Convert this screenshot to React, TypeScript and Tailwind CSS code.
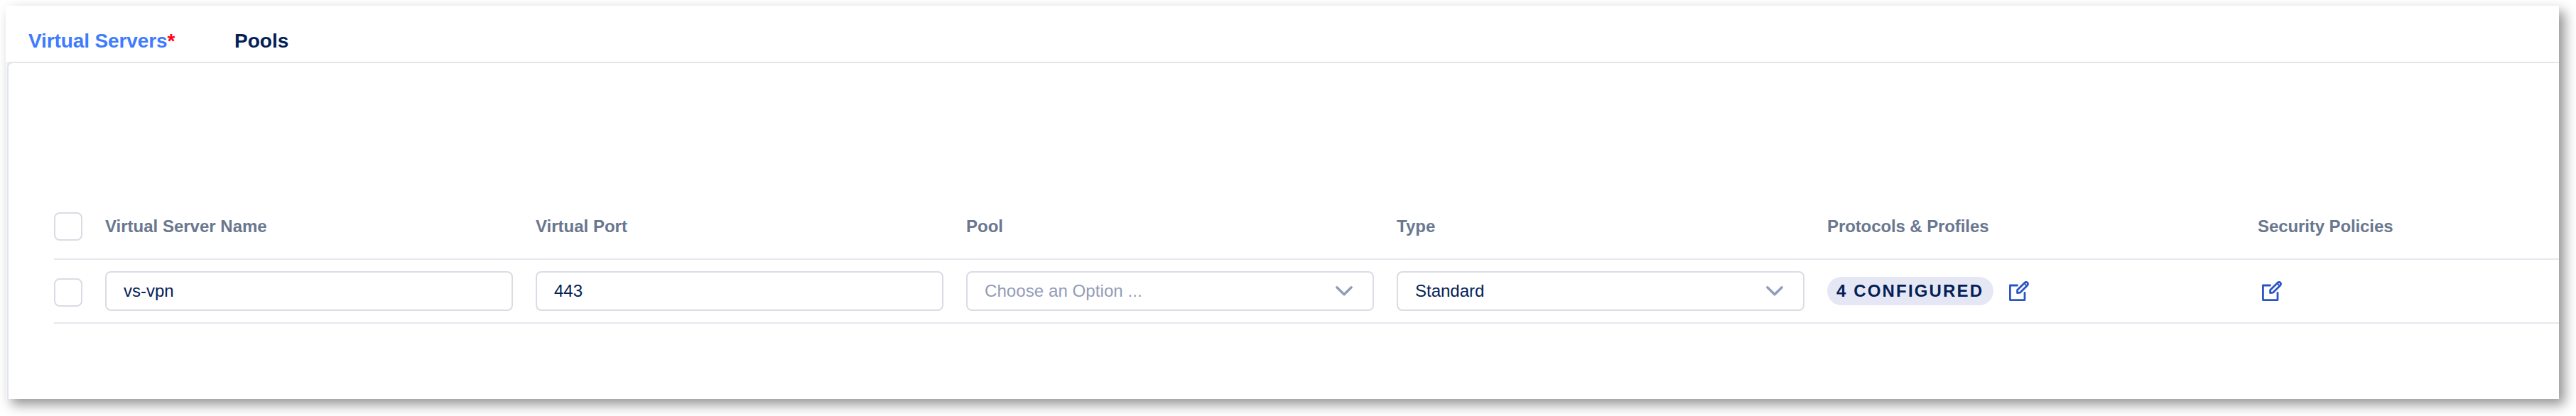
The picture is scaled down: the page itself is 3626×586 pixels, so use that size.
import type { ReactNode } from "react";

const cell = "w-[606px] shrink-0";
const field =
  "flex h-14 w-[574px] items-center justify-between rounded-lg border-2 border-[#d9dce3] bg-white pl-[24px] pr-[26px] text-[24px] leading-none";

function Checkbox() {
  return <span role="checkbox" aria-checked="false" className="mr-8 block h-10 w-10 shrink-0 rounded-lg border-2 border-[#d9dce3]" />;
}

function Chevron() {
  return (
    <svg className="h-4 w-7 shrink-0" viewBox="0 0 28 16" fill="none" stroke="#939bb8" strokeWidth="3.4" strokeLinecap="round" strokeLinejoin="round">
      <path d="M3.8 2.8 14 12.8 24.2 2.8" />
    </svg>
  );
}

function EditIcon() {
  return (
    <svg className="h-7 w-7 shrink-0" viewBox="0 0 28 28" fill="none" stroke="#2b55c7" strokeWidth="2.8" strokeLinecap="round" strokeLinejoin="round">
      <path d="M11.5 6H1.4v20.6H22V16.5" />
      <path d="M11.6 16.6V12.6L21.8 2.4Q24 .6 25.8 2.2q1.4 1.8 0 3.8L15.4 16.2Z" />
      <path d="M21.8 3.6 24.4 6.2" strokeWidth="2" />
    </svg>
  );
}

function Heading({ children }: { children: ReactNode }) {
  return <div className={cell}>{children}</div>;
}

export default function App() {
  return (
    <div className="h-[586px] w-[3626px] overflow-hidden bg-white pl-2 pt-2 font-['Liberation_Sans',Arial,sans-serif]">
      <main className="flex h-[554px] w-[3594px] flex-col bg-white shadow-[8px_8px_16px_rgba(0,0,0,0.42)]">
        <nav className="flex h-[79px] items-center pl-8 pt-5 text-[28px] font-bold leading-none">
          <span className="w-[290px] tracking-[-0.12px] text-[#3d7bff]">
            Virtual Servers<span className="text-[#ff0018]">*</span>
          </span>
          <span className="text-[#041e57]">Pools</span>
        </nav>
        <section className="flex-1 overflow-hidden border-l-2 border-[#f1f4fa] bg-[#eceef5]">
          <div className="h-full rounded-tl-lg border-l-2 border-t-2 border-[#e3e4ec] bg-white pl-16 pt-[185px]">
            <div className="flex h-[92px] items-center border-b-2 border-[#e7e8ee] text-[24px] font-bold leading-none text-[#69778f]">
              <Checkbox />
              <Heading>Virtual Server Name</Heading>
              <Heading>Virtual Port</Heading>
              <Heading>Pool</Heading>
              <Heading>Type</Heading>
              <Heading><span className="tracking-[-0.1px]">Protocols &amp; Profiles</span></Heading>
              <Heading><span className="tracking-[-0.1px]">Security Policies</span></Heading>
            </div>
            <div className="flex h-[90px] items-center border-b-2 border-[#e7e8ee] text-[#041e57]">
              <div className="pt-1"><Checkbox /></div>
              <div className={cell}><div className={field}>vs-vpn</div></div>
              <div className={cell}><div className={field}>443</div></div>
              <div className={cell}>
                <div className={field}><span className="tracking-[0.08px] text-[#939bb8]">Choose an Option ...</span><Chevron /></div>
              </div>
              <div className={cell}>
                <div className={field}>Standard<Chevron /></div>
              </div>
              <div className="flex w-[606px] shrink-0 items-center gap-[22px]">
                <span className="flex h-10 w-[234px] items-center rounded-full bg-[#e5e8f4] pl-[13px] text-[24px] font-bold leading-none tracking-[2.15px] whitespace-nowrap">4 CONFIGURED</span>
                <EditIcon />
              </div>
              <div className="flex shrink-0 pl-1.5"><EditIcon /></div>
            </div>
          </div>
        </section>
      </main>
    </div>
  );
}
